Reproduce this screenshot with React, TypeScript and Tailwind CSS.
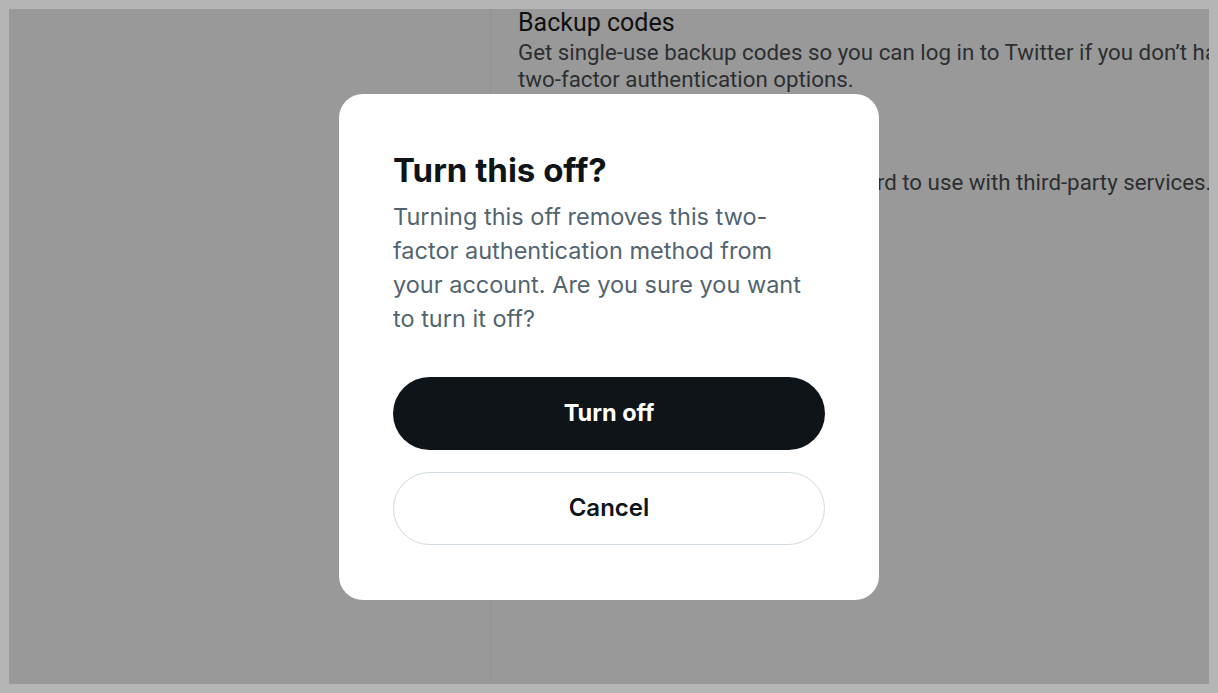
const App = () => {
  return (
    <div className="h-[693px] w-[1218px] bg-[#b5b5b5] pt-[9px] pl-[9px] pr-[9px] pb-[9px] font-['Inter',sans-serif]">
      <div className="flex h-full w-full overflow-hidden bg-[#999999]">
        <div className="w-[482px] shrink-0 border-r border-[#929292]" />
        <div className="flex-1 overflow-hidden whitespace-nowrap pl-[27px] font-['Roboto',sans-serif]">
          <h2 className="text-[25px] leading-[28px] text-[#101010]">Backup codes</h2>
          <p className="mt-[2px] text-[22.3px] leading-[27px] text-[#2c2f31]">
            Get single-use backup codes so you can log in to Twitter if you don’t have your phone.
            <br />
            two-factor authentication options.
          </p>
          <p className="mt-[76px] ml-[62px] text-[22.3px] leading-[27px] text-[#2c2f31]">
            Generate a temporary password to use with third-party services.
          </p>
        </div>
      </div>

      <div className="fixed inset-0 flex items-center justify-center">
        <div className="w-[540px] rounded-[24px] bg-white px-[54px] pt-[56px] pb-[55px]">
          <h1 className="text-[33px] font-bold leading-[40px] text-[#0f1419]">Turn this off?</h1>
          <p className="mt-[10px] text-[23.5px] leading-[34px] text-[#536471]">
            Turning this off removes this two-
            <br />
            factor authentication method from
            <br />
            your account. Are you sure you want
            <br />
            to turn it off?
          </p>
          <div className="mt-[41px] flex flex-col gap-[22px]">
            <button className="h-[73px] w-full rounded-full bg-[#0f1419] text-[23.5px] font-bold text-white">
              Turn off
            </button>
            <button className="h-[73px] w-full rounded-full border border-[#cfd9de] bg-white text-[24px] font-semibold text-[#0f1419]">
              Cancel
            </button>
          </div>
        </div>
      </div>
    </div>
  );
};

export default App;
